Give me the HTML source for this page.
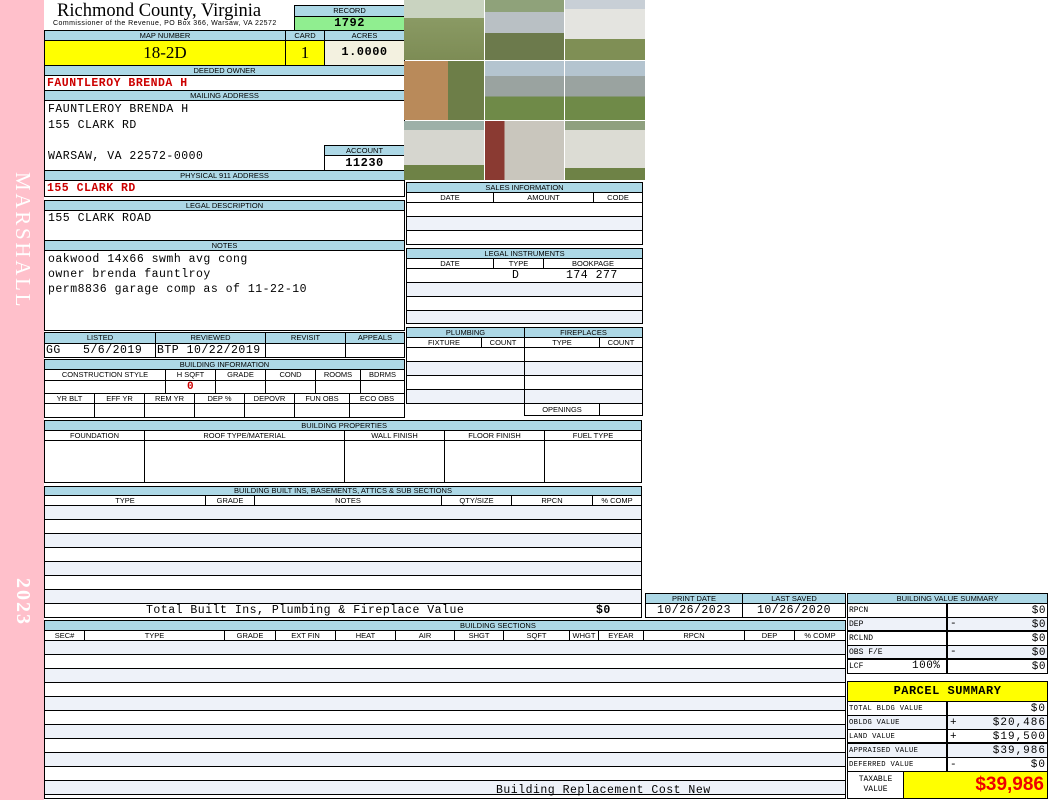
<!DOCTYPE html>
<html><head><meta charset="utf-8"><style>
*{margin:0;padding:0;box-sizing:border-box}
body{width:1050px;height:800px;background:#fff;position:relative;overflow:hidden;font-family:"Liberation Sans",sans-serif}
.a{position:absolute}
.b{position:absolute;border:1px solid #000}
.h{position:absolute;background:#add8e6;border:1px solid #000;font-size:7.5px;text-align:center;line-height:9px;color:#000;overflow:hidden;white-space:nowrap}
.c{position:absolute;border:1px solid #000;font-size:7.5px;text-align:center;line-height:9px;background:#fff;overflow:hidden;white-space:nowrap}
.m{font-family:"Liberation Mono",monospace;letter-spacing:0.5px}
.r{position:absolute;background:#eef2f9}
.ln{position:absolute;height:1px;background:#000}
.vl{position:absolute;width:1px;background:#000}
.red{color:#c00;font-weight:bold}
.ph{position:absolute}
</style></head><body>
<!-- sidebar -->
<div class="a" style="left:0;top:0;width:44px;height:800px;background:#ffc0cb"></div>
<div class="a" style="left:10px;top:172px;width:24px;height:140px;"><div style="transform:rotate(90deg);transform-origin:0 0;position:absolute;left:25px;top:0;font-family:'Liberation Serif',serif;font-size:21px;color:#fff;white-space:nowrap;letter-spacing:2.7px">MARSHALL</div></div>
<div class="a" style="left:10px;top:578px;width:24px;height:50px;"><div style="transform:rotate(90deg);transform-origin:0 0;position:absolute;left:24px;top:0;font-family:'Liberation Serif',serif;font-size:20px;color:#fff;white-space:nowrap;font-weight:bold;letter-spacing:2px">2023</div></div>

<!-- title -->
<div class="a" style="left:57px;top:1px;font-family:'Liberation Serif',serif;font-size:18.5px;line-height:21px">Richmond County, Virginia</div>
<div class="a" style="left:53px;top:20px;font-size:7px;line-height:8px;letter-spacing:0.45px;white-space:nowrap">Commissioner of the Revenue, PO Box 366, Warsaw, VA 22572</div>
<div class="h" style="left:294px;top:5px;width:111px;height:12px">RECORD</div>
<div class="c m" style="left:294px;top:16px;width:111px;height:15px;background:#90ee90;font-size:12px;line-height:13px;font-weight:bold">1792</div>

<div class="h" style="left:44px;top:30px;width:242px;height:11px">MAP NUMBER</div>
<div class="h" style="left:285px;top:30px;width:40px;height:11px">CARD</div>
<div class="h" style="left:324px;top:30px;width:81px;height:11px">ACRES</div>
<div class="c" style="left:44px;top:40px;width:242px;height:26px;background:#ffff00;font-family:'Liberation Serif',serif;font-size:17px;line-height:23px">18-2D</div>
<div class="c" style="left:285px;top:40px;width:40px;height:26px;background:#ffff00;font-family:'Liberation Serif',serif;font-size:17px;line-height:23px">1</div>
<div class="c m" style="left:324px;top:40px;width:81px;height:26px;background:#f3f1e0;font-size:12px;line-height:23px;font-weight:bold">1.0000</div>

<div class="h" style="left:44px;top:65px;width:361px;height:11px">DEEDED OWNER</div>
<div class="b m red" style="left:44px;top:75px;width:361px;height:16px;font-size:11.5px;line-height:15px;padding-left:2px">FAUNTLEROY BRENDA H</div>
<div class="h" style="left:44px;top:90px;width:361px;height:11px">MAILING ADDRESS</div>
<div class="b m" style="left:44px;top:100px;width:361px;height:71px;font-size:11.5px;line-height:15.5px;padding:1px 3px">FAUNTLEROY BRENDA H<br>155 CLARK RD<br><br>WARSAW, VA 22572-0000</div>
<div class="h" style="left:324px;top:145px;width:81px;height:11px">ACCOUNT</div>
<div class="c m" style="left:324px;top:155px;width:81px;height:16px;font-size:12px;line-height:14px;font-weight:bold">11230</div>
<div class="h" style="left:44px;top:170px;width:361px;height:11px">PHYSICAL 911 ADDRESS</div>
<div class="b m red" style="left:44px;top:180px;width:361px;height:17px;font-size:11.5px;line-height:16px;padding-left:2px">155 CLARK RD</div>

<div class="h" style="left:44px;top:200px;width:361px;height:11px">LEGAL DESCRIPTION</div>
<div class="b m" style="left:44px;top:210px;width:361px;height:31px;font-size:11.5px;line-height:16px;padding-left:3px">155 CLARK ROAD</div>
<div class="h" style="left:44px;top:240px;width:361px;height:11px">NOTES</div>
<div class="b m" style="left:44px;top:250px;width:361px;height:81px;font-size:11.5px;line-height:15px;padding:1px 3px">oakwood 14x66 swmh avg cong<br>owner brenda fauntlroy<br>perm8836 garage comp as of 11-22-10</div>

<!-- listed -->
<div class="h" style="left:44px;top:332px;width:112px;height:12px">LISTED</div>
<div class="h" style="left:155px;top:332px;width:111px;height:12px">REVIEWED</div>
<div class="h" style="left:265px;top:332px;width:81px;height:12px">REVISIT</div>
<div class="h" style="left:345px;top:332px;width:60px;height:12px">APPEALS</div>
<div class="c m" style="left:44px;top:343px;width:112px;height:15px;font-size:11.5px;line-height:13px;text-align:left;padding-left:1px">GG&nbsp;&nbsp;&nbsp;5/6/2019</div>
<div class="c m" style="left:155px;top:343px;width:111px;height:15px;font-size:11.5px;line-height:13px;text-align:left;padding-left:1px">BTP 10/22/2019</div>
<div class="c" style="left:265px;top:343px;width:81px;height:15px"></div>
<div class="c" style="left:345px;top:343px;width:60px;height:15px"></div>

<div class="h" style="left:44px;top:359px;width:361px;height:11px">BUILDING INFORMATION</div>
<div class="c" style="left:44px;top:369px;width:122px;height:12px">CONSTRUCTION STYLE</div>
<div class="c" style="left:165px;top:369px;width:51px;height:12px">H SQFT</div>
<div class="c" style="left:215px;top:369px;width:51px;height:12px">GRADE</div>
<div class="c" style="left:265px;top:369px;width:51px;height:12px">COND</div>
<div class="c" style="left:315px;top:369px;width:46px;height:12px">ROOMS</div>
<div class="c" style="left:360px;top:369px;width:45px;height:12px">BDRMS</div>
<div class="c" style="left:44px;top:380px;width:122px;height:14px"></div>
<div class="c m red" style="left:165px;top:380px;width:51px;height:14px;font-size:11px;line-height:13px">0</div>
<div class="c" style="left:215px;top:380px;width:51px;height:14px"></div>
<div class="c" style="left:265px;top:380px;width:51px;height:14px"></div>
<div class="c" style="left:315px;top:380px;width:46px;height:14px"></div>
<div class="c" style="left:360px;top:380px;width:45px;height:14px"></div>
<div class="c" style="left:44px;top:393px;width:51px;height:11px">YR BLT</div>
<div class="c" style="left:94px;top:393px;width:51px;height:11px">EFF YR</div>
<div class="c" style="left:144px;top:393px;width:51px;height:11px">REM YR</div>
<div class="c" style="left:194px;top:393px;width:51px;height:11px">DEP %</div>
<div class="c" style="left:244px;top:393px;width:51px;height:11px">DEPOVR</div>
<div class="c" style="left:294px;top:393px;width:56px;height:11px">FUN OBS</div>
<div class="c" style="left:349px;top:393px;width:56px;height:11px">ECO OBS</div>
<div class="c" style="left:44px;top:403px;width:51px;height:15px"></div>
<div class="c" style="left:94px;top:403px;width:51px;height:15px"></div>
<div class="c" style="left:144px;top:403px;width:51px;height:15px"></div>
<div class="c" style="left:194px;top:403px;width:51px;height:15px"></div>
<div class="c" style="left:244px;top:403px;width:51px;height:15px"></div>
<div class="c" style="left:294px;top:403px;width:56px;height:15px"></div>
<div class="c" style="left:349px;top:403px;width:56px;height:15px"></div>

<!-- photos -->
<div class="ph" style="left:404px;top:0;width:80px;height:60px;background:linear-gradient(#c9d3c0 0 30%,#8a9a64 30%,#7d8c55)"></div>
<div class="ph" style="left:485px;top:0;width:79px;height:60px;background:linear-gradient(#8fa27a 0 20%,#b9c0c4 20% 55%,#6c7a4c 55%)"></div>
<div class="ph" style="left:565px;top:0;width:80px;height:60px;background:linear-gradient(#c8cfd6 0 15%,#e4e4e0 15% 65%,#7f8f55 65%)"></div>
<div class="ph" style="left:404px;top:61px;width:80px;height:59px;background:linear-gradient(90deg,#b98a5a 0 55%,#6d7e48 55%)"></div>
<div class="ph" style="left:485px;top:61px;width:79px;height:59px;background:linear-gradient(#b4c4cf 0 25%,#9aa3a0 25% 60%,#6f8a48 60%)"></div>
<div class="ph" style="left:565px;top:61px;width:80px;height:59px;background:linear-gradient(#b4c4cf 0 25%,#9aa3a0 25% 60%,#6f8a48 60%)"></div>
<div class="ph" style="left:404px;top:121px;width:80px;height:59px;background:linear-gradient(#9db0a8 0 15%,#d6d6cf 15% 75%,#6e8246 75%)"></div>
<div class="ph" style="left:485px;top:121px;width:79px;height:59px;background:linear-gradient(90deg,#8a3a32 0 25%,#c9c6bd 25%)"></div>
<div class="ph" style="left:565px;top:121px;width:80px;height:59px;background:linear-gradient(#8fa07e 0 15%,#dcdcd4 15% 80%,#6e8246 80%)"></div>

<!-- sales -->
<div class="h" style="left:406px;top:182px;width:237px;height:11px">SALES INFORMATION</div>
<div class="c" style="left:406px;top:192px;width:88px;height:11px">DATE</div>
<div class="c" style="left:493px;top:192px;width:101px;height:11px">AMOUNT</div>
<div class="c" style="left:593px;top:192px;width:50px;height:11px">CODE</div>
<div class="b" style="left:406px;top:202px;width:237px;height:43px;background:linear-gradient(#fff 0 13px,#000 13px 14px,#eef2f9 14px 27px,#000 27px 28px,#fff 28px)"></div>

<div class="h" style="left:406px;top:248px;width:237px;height:11px">LEGAL INSTRUMENTS</div>
<div class="c" style="left:406px;top:258px;width:88px;height:11px">DATE</div>
<div class="c" style="left:493px;top:258px;width:51px;height:11px">TYPE</div>
<div class="c" style="left:543px;top:258px;width:100px;height:11px">BOOKPAGE</div>
<div class="b" style="left:406px;top:268px;width:237px;height:56px;background:linear-gradient(#fff 0 13px,#000 13px 14px,#eef2f9 14px 27px,#000 27px 28px,#fff 28px 41px,#000 41px 42px,#eef2f9 42px)"></div>
<div class="a m" style="left:512px;top:269px;font-size:11.5px;line-height:13px">D</div>
<div class="a m" style="left:566px;top:269px;font-size:11.5px;line-height:13px">174 277</div>

<div class="h" style="left:406px;top:327px;width:119px;height:11px">PLUMBING</div>
<div class="h" style="left:524px;top:327px;width:119px;height:11px">FIREPLACES</div>
<div class="c" style="left:406px;top:337px;width:76px;height:11px">FIXTURE</div>
<div class="c" style="left:481px;top:337px;width:44px;height:11px">COUNT</div>
<div class="c" style="left:524px;top:337px;width:76px;height:11px">TYPE</div>
<div class="c" style="left:599px;top:337px;width:44px;height:11px">COUNT</div>
<div class="b" style="left:406px;top:347px;width:119px;height:57px;background:linear-gradient(#fff 0 13px,#000 13px 14px,#eef2f9 14px 27px,#000 27px 28px,#fff 28px 41px,#000 41px 42px,#eef2f9 42px)"></div>
<div class="b" style="left:524px;top:347px;width:119px;height:57px;background:linear-gradient(#fff 0 13px,#000 13px 14px,#eef2f9 14px 27px,#000 27px 28px,#fff 28px 41px,#000 41px 42px,#eef2f9 42px)"></div>
<div class="c" style="left:524px;top:403px;width:76px;height:13px;line-height:11px">OPENINGS</div>
<div class="c" style="left:599px;top:403px;width:44px;height:13px"></div>

<!-- building properties -->
<div class="h" style="left:44px;top:420px;width:598px;height:11px;text-align:right;padding-right:254px">BUILDING PROPERTIES</div>
<div class="c" style="left:44px;top:430px;width:101px;height:11px">FOUNDATION</div>
<div class="c" style="left:144px;top:430px;width:201px;height:11px">ROOF TYPE/MATERIAL</div>
<div class="c" style="left:344px;top:430px;width:101px;height:11px">WALL FINISH</div>
<div class="c" style="left:444px;top:430px;width:101px;height:11px">FLOOR FINISH</div>
<div class="c" style="left:544px;top:430px;width:98px;height:11px">FUEL TYPE</div>
<div class="c" style="left:44px;top:440px;width:101px;height:43px"></div>
<div class="c" style="left:144px;top:440px;width:201px;height:43px"></div>
<div class="c" style="left:344px;top:440px;width:101px;height:43px"></div>
<div class="c" style="left:444px;top:440px;width:101px;height:43px"></div>
<div class="c" style="left:544px;top:440px;width:98px;height:43px"></div>

<!-- built ins -->
<div class="h" style="left:44px;top:486px;width:598px;height:10px;line-height:8px">BUILDING BUILT INS, BASEMENTS, ATTICS &amp; SUB SECTIONS</div>
<div class="c" style="left:44px;top:495px;width:162px;height:11px">TYPE</div>
<div class="c" style="left:205px;top:495px;width:50px;height:11px">GRADE</div>
<div class="c" style="left:254px;top:495px;width:188px;height:11px">NOTES</div>
<div class="c" style="left:441px;top:495px;width:71px;height:11px">QTY/SIZE</div>
<div class="c" style="left:511px;top:495px;width:82px;height:11px">RPCN</div>
<div class="c" style="left:592px;top:495px;width:50px;height:11px">% COMP</div>
<div class="b" style="left:44px;top:505px;width:598px;height:99px;background:repeating-linear-gradient(#eef2f9 0 13px,#000 13px 14px,#fff 14px 27px,#000 27px 28px)"></div>
<div class="b m" style="left:44px;top:603px;width:598px;height:15px;font-size:11.5px;line-height:14px"><span style="position:absolute;left:101px">Total Built Ins, Plumbing &amp; Fireplace Value</span><span style="position:absolute;left:551px;font-weight:bold">$0</span></div>

<!-- print date -->
<div class="h" style="left:645px;top:593px;width:98px;height:11px">PRINT DATE</div>
<div class="h" style="left:742px;top:593px;width:104px;height:11px">LAST SAVED</div>
<div class="c m" style="left:645px;top:603px;width:98px;height:15px;font-size:11.5px;line-height:13px">10/26/2023</div>
<div class="c m" style="left:742px;top:603px;width:104px;height:15px;font-size:11.5px;line-height:13px">10/26/2020</div>

<!-- building sections -->
<div class="h" style="left:44px;top:620px;width:802px;height:11px;padding-left:415px;text-align:left">BUILDING SECTIONS</div>
<div class="c" style="left:44px;top:630px;width:41px;height:11px">SEC#</div>
<div class="c" style="left:84px;top:630px;width:141px;height:11px">TYPE</div>
<div class="c" style="left:224px;top:630px;width:52px;height:11px">GRADE</div>
<div class="c" style="left:275px;top:630px;width:61px;height:11px">EXT FIN</div>
<div class="c" style="left:335px;top:630px;width:61px;height:11px">HEAT</div>
<div class="c" style="left:395px;top:630px;width:60px;height:11px">AIR</div>
<div class="c" style="left:454px;top:630px;width:50px;height:11px">SHGT</div>
<div class="c" style="left:503px;top:630px;width:67px;height:11px">SQFT</div>
<div class="c" style="left:569px;top:630px;width:30px;height:11px">WHGT</div>
<div class="c" style="left:598px;top:630px;width:46px;height:11px">EYEAR</div>
<div class="c" style="left:643px;top:630px;width:102px;height:11px">RPCN</div>
<div class="c" style="left:744px;top:630px;width:51px;height:11px">DEP</div>
<div class="c" style="left:794px;top:630px;width:52px;height:11px">% COMP</div>
<div class="b" style="left:44px;top:640px;width:802px;height:159px;background:repeating-linear-gradient(#eef2f9 0 13px,#000 13px 14px,#fff 14px 27px,#000 27px 28px)"></div>
<div class="a m" style="left:496px;top:784px;font-size:11.5px;line-height:13px">Building Replacement Cost New</div>

<!-- building value summary -->
<div class="h" style="left:847px;top:593px;width:201px;height:11px">BUILDING VALUE SUMMARY</div>
<div class="b m" style="left:847px;top:603px;width:201px;height:71px;font-size:10px;background:linear-gradient(#fff 0 13px,#000 13px 14px,#eef2f9 14px 26px,#000 26px 28px,#fff 28px 41px,#000 41px 42px,#eef2f9 42px 54px,#000 54px 56px,#fff 56px)"></div>
<div class="vl" style="left:946px;top:603px;height:71px;width:2px"></div>
<div class="a m" style="left:849px;top:604px;font-size:8px;line-height:14px;letter-spacing:0">RPCN<br>DEP<br>RCLND<br>OBS F/E<br>LCF</div>
<div class="a m" style="left:912px;top:660px;font-size:11px;line-height:13px">100%</div>
<div class="a m" style="left:950px;top:604px;width:96px;font-size:11px;line-height:14px;text-align:right">$0<br>$0<br>$0<br>$0<br>$0</div>
<div class="a m" style="left:950px;top:617px;font-size:11px;line-height:14px">-<br><br>-</div>

<!-- parcel summary -->
<div class="b" style="left:847px;top:681px;width:201px;height:21px;background:#ffff00;font-family:'Liberation Mono',monospace;font-weight:bold;font-size:12px;line-height:19px;text-align:center;letter-spacing:0.5px">PARCEL SUMMARY</div>
<div class="b" style="left:847px;top:701px;width:201px;height:71px;background:linear-gradient(#fff 0 13px,#000 13px 14px,#eef2f9 14px 27px,#000 27px 28px,#fff 28px 40px,#000 40px 42px,#eef2f9 42px 55px,#000 55px 56px,#fff 56px)"></div>
<div class="vl" style="left:946px;top:701px;height:71px;width:2px"></div>
<div class="a m" style="left:849px;top:702px;font-size:7.2px;line-height:14px;letter-spacing:0.3px">TOTAL BLDG VALUE<br>OBLDG VALUE<br>LAND VALUE<br>APPRAISED VALUE<br>DEFERRED VALUE</div>
<div class="a m" style="left:950px;top:702px;width:96px;font-size:11px;line-height:14px;text-align:right;letter-spacing:1px">$0<br>$20,486<br>$19,500<br>$39,986<br>$0</div>
<div class="a m" style="left:950px;top:716px;font-size:11px;line-height:14px">+<br>+<br><br>-</div>
<div class="b m" style="left:847px;top:771px;width:57px;height:28px;font-size:8px;line-height:10px;text-align:center;padding-top:3px;letter-spacing:0">TAXABLE<br>VALUE</div>
<div class="b" style="left:903px;top:771px;width:145px;height:28px;background:#ffff00;color:#e00;font-weight:bold;font-size:19px;line-height:26px;text-align:right;padding-right:3px">$39,986</div>
</body></html>
